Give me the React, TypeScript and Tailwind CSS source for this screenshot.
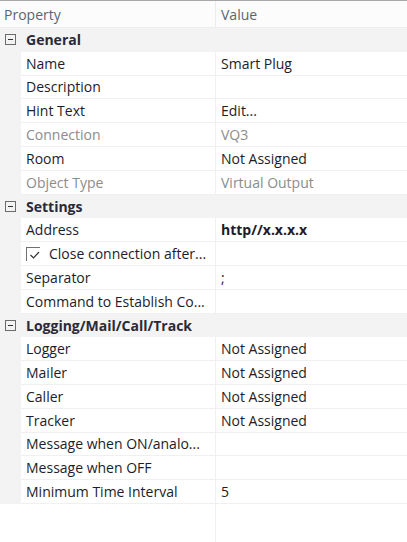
import React from "react";

type Row =
  | { kind: "group"; label: string }
  | { kind: "prop"; label: string; value?: string; disabled?: boolean; bold?: boolean; check?: boolean };

const rows: Row[] = [
  { kind: "group", label: "General" },
  { kind: "prop", label: "Name", value: "Smart Plug" },
  { kind: "prop", label: "Description" },
  { kind: "prop", label: "Hint Text", value: "Edit..." },
  { kind: "prop", label: "Connection", value: "VQ3", disabled: true },
  { kind: "prop", label: "Room", value: "Not Assigned" },
  { kind: "prop", label: "Object Type", value: "Virtual Output", disabled: true },
  { kind: "group", label: "Settings" },
  { kind: "prop", label: "Address", value: "http//x.x.x.x", bold: true },
  { kind: "prop", label: "Close connection after...", check: true },
  { kind: "prop", label: "Separator", value: ";" },
  { kind: "prop", label: "Command to Establish Co..." },
  { kind: "group", label: "Logging/Mail/Call/Track" },
  { kind: "prop", label: "Logger", value: "Not Assigned" },
  { kind: "prop", label: "Mailer", value: "Not Assigned" },
  { kind: "prop", label: "Caller", value: "Not Assigned" },
  { kind: "prop", label: "Tracker", value: "Not Assigned" },
  { kind: "prop", label: "Message when ON/analo..." },
  { kind: "prop", label: "Message when OFF" },
  { kind: "prop", label: "Minimum Time Interval", value: "5" },
];

const Collapse = () => (
  <svg width="11" height="11" viewBox="0 0 11 11" className="shrink-0">
    <rect x="0.5" y="0.5" width="10" height="10" fill="none" stroke="#6b6b6b" />
    <path d="M3 5.5h5" stroke="#333" />
  </svg>
);

const Check = () => (
  <div className="relative mr-[9px] h-[14px] w-[14px] shrink-0 border-l border-t border-[#707070]">
    <svg width="12" height="10" viewBox="0 0 12 10" className="absolute left-[2px] top-[2px]">
      <path d="M1.5 5l3 3 5.5-6" fill="none" stroke="#333" strokeWidth="1.2" />
    </svg>
  </div>
);

export default function App() {
  return (
    <div
      className="flex h-[542px] w-[407px] flex-col overflow-hidden bg-white text-[14px] text-[#1c1c2a]"
      style={{ fontFamily: '"Open Sans", "Noto Sans", sans-serif' }}
    >
      <div className="flex h-[28px] shrink-0 border-t border-b border-t-[#a8a8a8] border-b-[#ececec] bg-[#fcfcfc] text-[#5b6470]">
        <div className="flex w-[216px] items-center border-r border-[#ececec] pl-[4px]">Property</div>
        <div className="flex flex-1 items-center pl-[5px]">Value</div>
      </div>
      {rows.map((r, i) =>
        r.kind === "group" ? (
          <div key={i} className="flex h-[23.8px] shrink-0 items-center bg-[#f3f3f3] pl-[5px]">
            <Collapse />
            <span className="ml-[10px] font-bold text-[#2a2a38]">{r.label}</span>
          </div>
        ) : (
          <div key={i} className="flex h-[23.8px] shrink-0 bg-[#f3f3f3]">
            <div className="ml-[21px] flex flex-1 border-b border-[#f0f0f0] bg-white">
              <div
                className={`flex w-[195px] items-center overflow-hidden whitespace-nowrap border-r border-[#f0f0f0] pl-[5px] ${
                  r.disabled ? "text-[#8c8c8c]" : ""
                }`}
              >
                {r.check && <Check />}
                {r.label}
              </div>
              <div
                className={`flex flex-1 items-center pl-[5px] ${r.disabled ? "text-[#8c8c8c]" : ""} ${
                  r.bold ? "font-bold" : ""
                }`}
              >
                {r.value}
              </div>
            </div>
          </div>
        )
      )}
      <div className="flex flex-1">
        <div className="w-[216px] border-r border-[#f0f0f0]" />
        <div className="flex-1" />
      </div>
    </div>
  );
}
